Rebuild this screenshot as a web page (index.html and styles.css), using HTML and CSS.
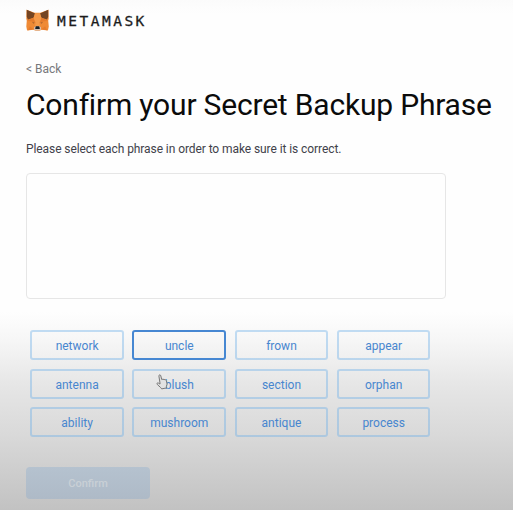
FILE: index.html
```html
<!DOCTYPE html>
<html lang="en">
<head>
<meta charset="utf-8">
<title>MetaMask</title>
<link rel="stylesheet" href="styles.css">
</head>
<body>
<main class="page">
  <header class="brand">
    <svg class="fox" viewBox="0 0 24 23" aria-hidden="true">
      <path fill="#ef8a35" d="M.5.7 9 3.8h6L23.5.7l.2 9.5-.5 2 .6 6-.9 4.2-6.4-.6-2.7 1h-3.6l-2.7-1-6.4.6L.3 18.2l.5-6-.5-2z"/>
      <path fill="#754522" d="M.8.7 9.4 4.6 7.8 9.2 2 11 .8 8zM23.2.7 14.6 4.6l1.6 4.6L22 11l1.2-3z"/>
      <path fill="#e67c2c" d="m1 12.2 6.8-3 1.7 5-3.2-1.1zM23 12.2l-6.8-3-1.7 5 3.2-1.1zM2 22.2 4 18l4 3.3zM22 22.2 20 18l-4 3.3z"/>
      <path fill="#f59a49" d="M9.4 4.4h5.2L16 9.2l-2 5 .5 4h-5l.5-4-2-5z"/>
      <path fill="#a8602c" d="m6.2 13.3 3 1.2-1.5.8zM17.8 13.3l-3 1.2 1.5.8z"/>
      <path fill="#d7c1b3" d="m8.4 19 1.6-1h4l1.6 1v2.6l-1.8 1h-3.6l-1.8-1z"/>
      <path fill="#171d23" d="m10 18.6.5-.5h3l.5.5.4 2.4h-4.8z"/>
    </svg>
    <span class="wordmark">METAMASK</span>
  </header>
  <a class="back">&lt; Back</a>
  <h1 class="title">Confirm your Secret Backup Phrase</h1>
  <p class="hint">Please select each phrase in order to make sure it is correct.</p>
  <section class="selection"></section>
  <section class="words">
    <button class="word">network</button>
    <button class="word active">uncle</button>
    <button class="word">frown</button>
    <button class="word">appear</button>
    <button class="word">antenna</button>
    <button class="word">blush
      <svg class="pointer" viewBox="0 0 12 16" aria-hidden="true"><path d="M4 9 2.9 2.1C2.7.6 4.5.4 4.8 1.8l.9 3.7 1.2-.3 1.2.3 1.2.2 1.1.9.7 3.5-.7 2.3.1 1.5-4.8 1-1-1.3-3.3-3C.3 9.5 1.4 8.4 2.5 9.1L4 10.1z"/></svg>
    </button>
    <button class="word">section</button>
    <button class="word">orphan</button>
    <button class="word">ability</button>
    <button class="word">mushroom</button>
    <button class="word">antique</button>
    <button class="word">process</button>
  </section>
  <button class="confirm">Confirm</button>
</main>
</body>
</html>
```
FILE: styles.css
```css
* { box-sizing: border-box; }
body {
  margin: 0;
  font-family: Roboto, "Liberation Sans", sans-serif;
}
.page {
  display: flex;
  flex-direction: column;
  align-items: flex-start;
  height: 510px;
  padding: 9px 0 0 26px;
  overflow: hidden;
  background: linear-gradient(#fbfbfb 0, #fefefe 14px, #fefefe 312px, #f7f7f7 338px, #e6e6e6 385px, #d9d9d9 435px, #cecece 470px, #c2c2c2 510px);
}
.brand {
  display: flex;
  align-items: flex-start;
  gap: 8px;
  height: 23px;
}
.fox { width: 23px; height: 22px; }
.wordmark {
  font-family: "DejaVu Sans Mono", monospace;
  font-size: 14.5px;
  line-height: 25px;
  letter-spacing: 2.5px;
  color: #1c1c1c;
  -webkit-text-stroke: 0.3px #1c1c1c;
}
.back {
  margin-top: 29px;
  font-size: 12px;
  line-height: 16px;
  color: #77787b;
}
.title {
  margin: 10px 0 0;
  font-size: 30px;
  font-weight: 400;
  line-height: 36px;
  letter-spacing: -0.19px;
  white-space: nowrap;
  color: #0b0b0b;
}
.hint {
  margin: 18px 0 0;
  font-size: 12px;
  line-height: 16px;
  letter-spacing: -0.08px;
  color: #41414a;
}
.selection {
  width: 420px;
  height: 126px;
  margin-top: 16px;
  border: 1px solid #e6e6e6;
  border-radius: 4px;
}
.words {
  display: grid;
  grid-template-columns: repeat(4, 93.6px);
  grid-auto-rows: 30px;
  gap: 8.5px 8.6px;
  margin: 31px 0 0 4.3px;
}
.word {
  position: relative;
  padding: 2px 0 0;
  border: 2px solid #6baee866;
  border-radius: 3px;
  background: none;
  font: 400 12px/24px Roboto, "Liberation Sans", sans-serif;
  color: #4886cf;
}
.active { border-color: #4687d2; }
.pointer {
  position: absolute;
  left: 22px;
  top: 3px;
  width: 12px;
  height: 16px;
  fill: #e2e2e2;
  stroke: #777;
  stroke-width: 1;
  stroke-linejoin: round;
}
.confirm {
  width: 124px;
  height: 32px;
  margin-top: 30px;
  padding: 1px 0 0;
  border: 0;
  border-radius: 4px;
  background: linear-gradient(#b5c2cf, #aebac7);
  font: 500 11px/31px Roboto, "Liberation Sans", sans-serif;
  color: #c9d0d6;
}
```
